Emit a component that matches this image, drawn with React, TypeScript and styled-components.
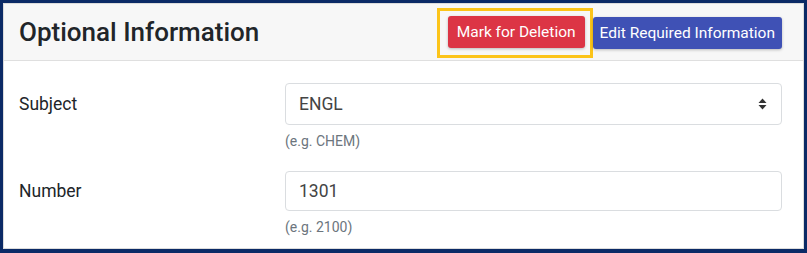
import styled, { createGlobalStyle } from "styled-components";

const GlobalStyle = createGlobalStyle`
  html, body {
    margin: 0;
    padding: 0;
    background: #0b2a66;
  }
  body {
    font-family: Roboto, "Liberation Sans", Arial, sans-serif;
  }
`;

const Frame = styled.div`
  width: 807px;
  height: 253px;
  box-sizing: border-box;
  padding: 3px 3px 4px 3px;
  background: #0b2a66;
`;

const Card = styled.div`
  height: 100%;
  box-sizing: border-box;
  background: #fff;
  border: 1px solid #dcdcdc;
  display: flex;
  flex-direction: column;
`;

const CardHeader = styled.div`
  height: 57px;
  box-sizing: border-box;
  background: #f7f7f7;
  border-bottom: 1px solid #dfdfdf;
  display: flex;
  align-items: center;
  justify-content: space-between;
  padding: 0 21px 0 15px;
`;

const Title = styled.h2`
  margin: 0;
  font-size: 26px;
  font-weight: 500;
  color: #212529;
`;

const Actions = styled.div`
  display: flex;
  align-items: center;
  margin-top: 2px;
`;

const Highlight = styled.span`
  display: inline-flex;
  border: 3px solid #fcc419;
  padding: 5px 5px 7px 8px;
`;

const Button = styled.button<{ $variant: "danger" | "primary" }>`
  font-family: inherit;
  font-size: 15.5px;
  color: #fff;
  border: none;
  border-radius: 3px;
  height: 32px;
  padding: 0 ${(p) => (p.$variant === "danger" ? 9 : 7)}px;
  background: ${(p) => (p.$variant === "danger" ? "#dc3545" : "#3f51b5")};
  box-shadow: 0 1px 3px rgba(0, 0, 0, 0.25);
  cursor: pointer;
`;

const Body = styled.div`
  padding: 22px 21px 0 15px;
  display: grid;
  grid-template-columns: 266px 1fr;
  row-gap: 22px;
`;

const Label = styled.label<{ $h: number }>`
  font-size: 17.5px;
  color: #212529;
  height: ${(p) => p.$h}px;
  display: flex;
  align-items: center;
`;

const Field = styled.div`
  display: flex;
  flex-direction: column;
`;

const Control = styled.div<{ $h: number }>`
  height: ${(p) => p.$h}px;
  box-sizing: border-box;
  border: 1px solid #dadde0;
  border-radius: 4px;
  display: flex;
  align-items: center;
  justify-content: space-between;
  padding: 0 14px 0 13px;
  font-size: 17.5px;
  color: #444;
`;

const Help = styled.small`
  margin-top: 8px;
  font-size: 14px;
  color: #6c757d;
`;

const Arrows = () => (
  <svg width="9" height="12" viewBox="0 0 9 12">
    <path d="M4.5 0.5 L8.5 5 H0.5 Z" fill="#333" />
    <path d="M4.5 11.5 L8.5 7 H0.5 Z" fill="#333" />
  </svg>
);

export default function App() {
  return (
    <>
      <GlobalStyle />
      <Frame>
        <Card>
          <CardHeader>
            <Title>Optional Information</Title>
            <Actions>
              <Highlight>
                <Button $variant="danger">Mark for Deletion</Button>
              </Highlight>
              <Button $variant="primary">Edit Required Information</Button>
            </Actions>
          </CardHeader>
          <Body>
            <Label $h={42}>Subject</Label>
            <Field>
              <Control $h={42}>
                <span>ENGL</span>
                <Arrows />
              </Control>
              <Help>(e.g. CHEM)</Help>
            </Field>
            <Label $h={40}>Number</Label>
            <Field>
              <Control $h={40}>
                <span>1301</span>
              </Control>
              <Help>(e.g. 2100)</Help>
            </Field>
          </Body>
        </Card>
      </Frame>
    </>
  );
}
